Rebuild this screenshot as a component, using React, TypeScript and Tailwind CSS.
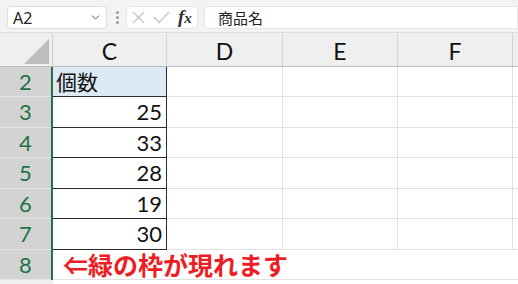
import { ChevronDown } from "lucide-react";

const cols = [
  { name: "C", w: "w-[114px]" },
  { name: "D", w: "w-[116px]" },
  { name: "E", w: "w-[115px]" },
  { name: "F", w: "w-[115px]" },
];

const rows = [
  { n: 2, h: "h-[30px]", c: "個数" },
  { n: 3, h: "h-[31px]", c: "25" },
  { n: 4, h: "h-[30px]", c: "33" },
  { n: 5, h: "h-[31px]", c: "28" },
  { n: 6, h: "h-[30px]", c: "19" },
  { n: 7, h: "h-[31px]", c: "30" },
  { n: 8, h: "h-[30px]", c: "" },
];

export default function App() {
  return (
    <div className="w-[518px] h-[284px] overflow-hidden bg-white font-['Lato','Noto_Sans_CJK_JP',sans-serif] text-[#111]">
      {/* Formula bar */}
      <div className="h-[33px] bg-[#f3f3f3] border-b border-[#dcdcdc] flex items-start pt-[6px]">
        <div className="ml-[7px] w-[100px] h-[23px] bg-white border border-[#dedede] rounded-[4px] flex items-center justify-between pl-[5px] pr-[4px]">
          <span className="text-[16px] font-['Noto_Sans',sans-serif] text-[#222] leading-none">A2</span>
          <ChevronDown className="w-[13px] h-[13px] text-[#555]" strokeWidth={1.8} />
        </div>
        <div className="ml-[8px] w-[4px] h-[23px] flex flex-col items-center justify-center gap-[2px]">
          <span className="w-[3px] h-[3px] rounded-full bg-[#9a9a9a]" />
          <span className="w-[3px] h-[3px] rounded-full bg-[#9a9a9a]" />
          <span className="w-[3px] h-[3px] rounded-full bg-[#9a9a9a]" />
        </div>
        <div className="ml-[7px] w-[72px] h-[23px] bg-white border border-[#e6e6e6] rounded-[4px] flex items-center pl-[5px] gap-[8px]">
          <svg width="13" height="13" viewBox="0 0 13 13">
            <path d="M1 1 L12 12 M12 1 L1 12" stroke="#c4c4c4" strokeWidth="1.3" fill="none" />
          </svg>
          <svg width="17" height="13" viewBox="0 0 17 13">
            <path d="M1 6 L6 11.5 L16 1" stroke="#c4c4c4" strokeWidth="1.3" fill="none" />
          </svg>
          <span className="font-['Liberation_Serif',serif] italic font-bold text-[19px] leading-none text-[#333] -mt-[2px]">
            f<span className="text-[15px]">x</span>
          </span>
        </div>
        <div className="ml-[6px] flex-1 h-[23px] bg-white border border-[#e6e6e6] rounded-l-[4px] flex items-center pl-[13px]">
          <span className="text-[15px] font-['Noto_Sans_CJK_JP',sans-serif] text-[#222] leading-none">商品名</span>
        </div>
      </div>

      {/* Column headers */}
      <div className="h-[34px] bg-[#efefef] border-b border-[#bdbdbd] flex">
        <div className="w-[53px] h-full flex items-end justify-end pr-[3px] pb-[2px] border-r border-[#d0d0d0]">
          <svg width="25" height="25" viewBox="0 0 25 25">
            <path d="M0 25 L25 25 L25 0 Z" fill="#bdbdbd" />
          </svg>
        </div>
        {cols.map((c) => (
          <div
            key={c.name}
            className={`${c.w} h-full flex items-center justify-center border-r border-[#d4d4d4] text-[23px] leading-none pt-[3px]`}
          >
            {c.name}
          </div>
        ))}
        <div className="flex-1" />
      </div>

      {/* Rows */}
      {rows.map((r) => (
        <div key={r.n} className={`${r.h} flex`}>
          <div className="w-[51px] h-full bg-[#d3d3d3] border-b border-[#e4e4e4] flex items-center justify-center text-[22px] text-[#217346] leading-none">
            {r.n}
          </div>
          <div className="w-[2px] h-full bg-[#217346]" />
          {r.n === 8 ? (
            <div className="flex-1 h-full flex items-center pl-[10px] border-b border-[#e1e1e1]">
              <span className="font-['Noto_Sans_CJK_JP',sans-serif] font-bold text-[25px] leading-none text-[#ee1c24]">
                ⇐緑の枠が現れます
              </span>
            </div>
          ) : (
            <>
              <div
                className={`w-[114px] h-full flex items-center border-r border-b border-[#2b2b2b] ${
                  r.n === 2
                    ? "bg-[#dde9f5] justify-start pl-[3px] text-[21px] font-['Noto_Sans_CJK_JP',sans-serif]"
                    : "justify-end pr-[4px] text-[22px]"
                } leading-none`}
              >
                {r.c}
              </div>
              <div className="w-[116px] h-full border-r border-b border-[#e1e1e1]" />
              <div className="w-[115px] h-full border-r border-b border-[#e1e1e1]" />
              <div className="w-[115px] h-full border-r border-b border-[#e1e1e1]" />
              <div className="flex-1 h-full border-b border-[#e1e1e1]" />
            </>
          )}
        </div>
      ))}
      <div className="h-[10px] flex">
        <div className="w-[51px] h-full bg-[#efefef]" />
        <div className="w-[2px] h-full bg-[#efefef]" />
      </div>
    </div>
  );
}
